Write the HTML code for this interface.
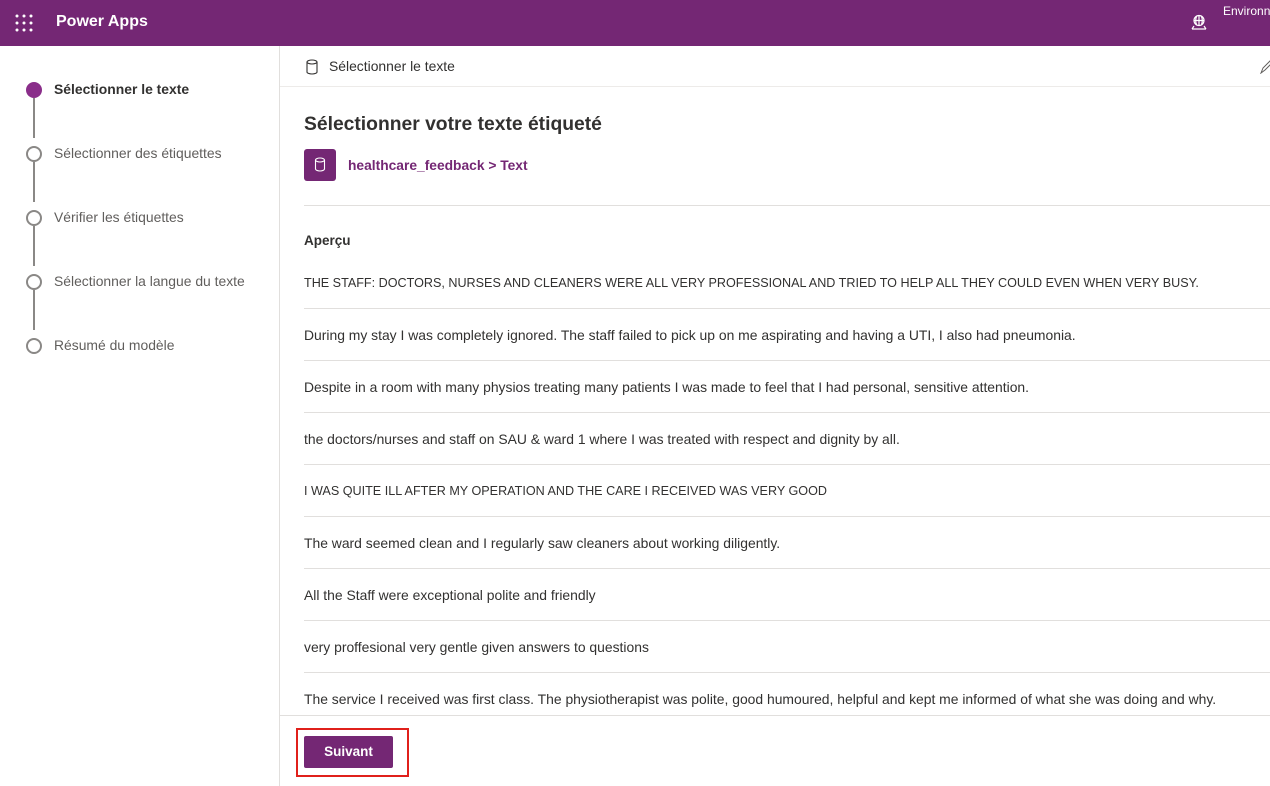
<!DOCTYPE html>
<html><head><meta charset="utf-8"><style>
*{margin:0;padding:0;box-sizing:border-box}
body{width:1270px;height:786px;overflow:hidden;font-family:"Segoe UI","Liberation Sans",sans-serif;color:#323130;background:#fff;position:relative}
.top{position:absolute;left:0;top:0;width:1270px;height:46px;background:#742774;color:#fff}
.top .t{position:absolute;left:56px;top:13px;font-size:16px;font-weight:bold}
.left{position:absolute;left:0;top:46px;width:280px;height:740px;border-right:1px solid #e1dfdd}
.step{position:absolute;left:54px;font-size:13.9px;color:#605e5c}
.c{position:absolute;left:26px;width:16px;height:16px;border-radius:50%;border:2px solid #8a8886;background:#fff}
.ln{position:absolute;left:33px;width:2px;height:40px;background:#8a8886}
.abs{position:absolute}
.row{position:absolute;left:304px;width:966px;font-size:13.9px;color:#323130;white-space:nowrap}
.row.u{font-size:12.6px;margin-top:1px}
.sep{position:absolute;left:304px;width:966px;height:1px;background:#e1dfdd}
</style></head><body>
<div class="top">
<svg class="abs" style="left:15px;top:14px" width="18" height="18"><g fill="#fff"><circle cx="2" cy="2" r="1.5"/><circle cx="9" cy="2" r="1.5"/><circle cx="16" cy="2" r="1.5"/><circle cx="2" cy="9" r="1.5"/><circle cx="9" cy="9" r="1.5"/><circle cx="16" cy="9" r="1.5"/><circle cx="2" cy="16" r="1.5"/><circle cx="9" cy="16" r="1.5"/><circle cx="16" cy="16" r="1.5"/></g></svg>
<div class="t">Power Apps</div>
<svg class="abs" style="left:1190px;top:14px" width="18" height="16" fill="none" stroke="#fff" stroke-width="1.2"><circle cx="9" cy="6.5" r="5"/><path d="M4 6.5h10M9 1.5v10M6.5 2.5c-1 2.5-1 5.5 0 8M11.5 2.5c1 2.5 1 5.5 0 8M2 15h14M4 12l-2 3M14 12l2 3"/></svg>
<div class="abs" style="left:1223px;top:4px;font-size:12px">Environn</div>
</div>
<div class="left">
<div class="abs" style="left:26px;top:36px;width:16px;height:16px;border-radius:50%;background:#8a2e8a"></div>
<div class="step" style="top:35px;color:#323130;font-weight:600">Sélectionner le texte</div>
<div class="ln" style="top:52px"></div>
<div class="c" style="top:100px"></div><div class="step" style="top:99px">Sélectionner des étiquettes</div>
<div class="ln" style="top:116px"></div>
<div class="c" style="top:164px"></div><div class="step" style="top:163px">Vérifier les étiquettes</div>
<div class="ln" style="top:180px"></div>
<div class="c" style="top:228px"></div><div class="step" style="top:227px">Sélectionner la langue du texte</div>
<div class="ln" style="top:244px"></div>
<div class="c" style="top:292px"></div><div class="step" style="top:291px">Résumé du modèle</div>
</div>
<div class="abs" style="left:280px;top:86px;width:990px;height:1px;background:#edebe9"></div>
<svg class="abs" style="left:305px;top:59px" width="14" height="16" fill="none" stroke="#323130" stroke-width="1.1"><ellipse cx="7" cy="3" rx="5" ry="2"/><path d="M2 3v10c0 1.1 2.2 2 5 2s5-.9 5-2V3"/></svg>
<div class="abs" style="left:329px;top:58px;font-size:13.9px">Sélectionner le texte</div>
<svg class="abs" style="left:1260px;top:60px" width="12" height="14" fill="none" stroke="#605e5c"><path d="M1 13l2-5 7-7 2 2-7 7z"/></svg>
<div class="abs" style="left:304px;top:114px;font-size:19.3px;font-weight:600">Sélectionner votre texte étiqueté</div>
<div class="abs" style="left:304px;top:149px;width:32px;height:32px;border-radius:3px;background:#742774"></div>
<svg class="abs" style="left:314px;top:157px" width="12" height="16" fill="none" stroke="#fff" stroke-width="1.1"><ellipse cx="6" cy="3" rx="4.5" ry="2"/><path d="M1.5 3v9c0 1 2 2 4.5 2s4.5-1 4.5-2V3"/></svg>
<div class="abs" style="left:348px;top:158px;font-size:13.8px;color:#742774;font-weight:600">healthcare_feedback &gt; Text</div>
<div class="sep" style="top:205px"></div>
<div class="abs" style="left:304px;top:233px;font-size:13.5px;font-weight:600">Aperçu</div>
<div class="row u" style="top:275px">THE STAFF: DOCTORS, NURSES AND CLEANERS WERE ALL VERY PROFESSIONAL AND TRIED TO HELP ALL THEY COULD EVEN WHEN VERY BUSY.</div>
<div class="sep" style="top:308px"></div>
<div class="row" style="top:327px">During my stay I was completely ignored. The staff failed to pick up on me aspirating and having a UTI, I also had pneumonia.</div>
<div class="sep" style="top:360px"></div>
<div class="row" style="top:379px">Despite in a room with many physios treating many patients I was made to feel that I had personal, sensitive attention.</div>
<div class="sep" style="top:412px"></div>
<div class="row" style="top:431px">the doctors/nurses and staff on SAU &amp; ward 1 where I was treated with respect and dignity by all.</div>
<div class="sep" style="top:464px"></div>
<div class="row u" style="top:483px">I WAS QUITE ILL AFTER MY OPERATION AND THE CARE I RECEIVED WAS VERY GOOD</div>
<div class="sep" style="top:516px"></div>
<div class="row" style="top:535px">The ward seemed clean and I regularly saw cleaners about working diligently.</div>
<div class="sep" style="top:568px"></div>
<div class="row" style="top:587px">All the Staff were exceptional polite and friendly</div>
<div class="sep" style="top:620px"></div>
<div class="row" style="top:639px">very proffesional very gentle given answers to questions</div>
<div class="sep" style="top:672px"></div>
<div class="row" style="top:691px">The service I received was first class. The physiotherapist was polite, good humoured, helpful and kept me informed of what she was doing and why.</div>
<div class="abs" style="left:280px;top:715px;width:990px;height:1px;background:#e1dfdd"></div>
<div class="abs" style="left:296px;top:728px;width:113px;height:49px;border:2px solid #e0201b"></div>
<div class="abs" style="left:304px;top:736px;width:89px;height:32px;background:#742774;border-radius:2px;color:#fff;font-size:13.5px;font-weight:600;text-align:center;line-height:32px">Suivant</div>
</body></html>
